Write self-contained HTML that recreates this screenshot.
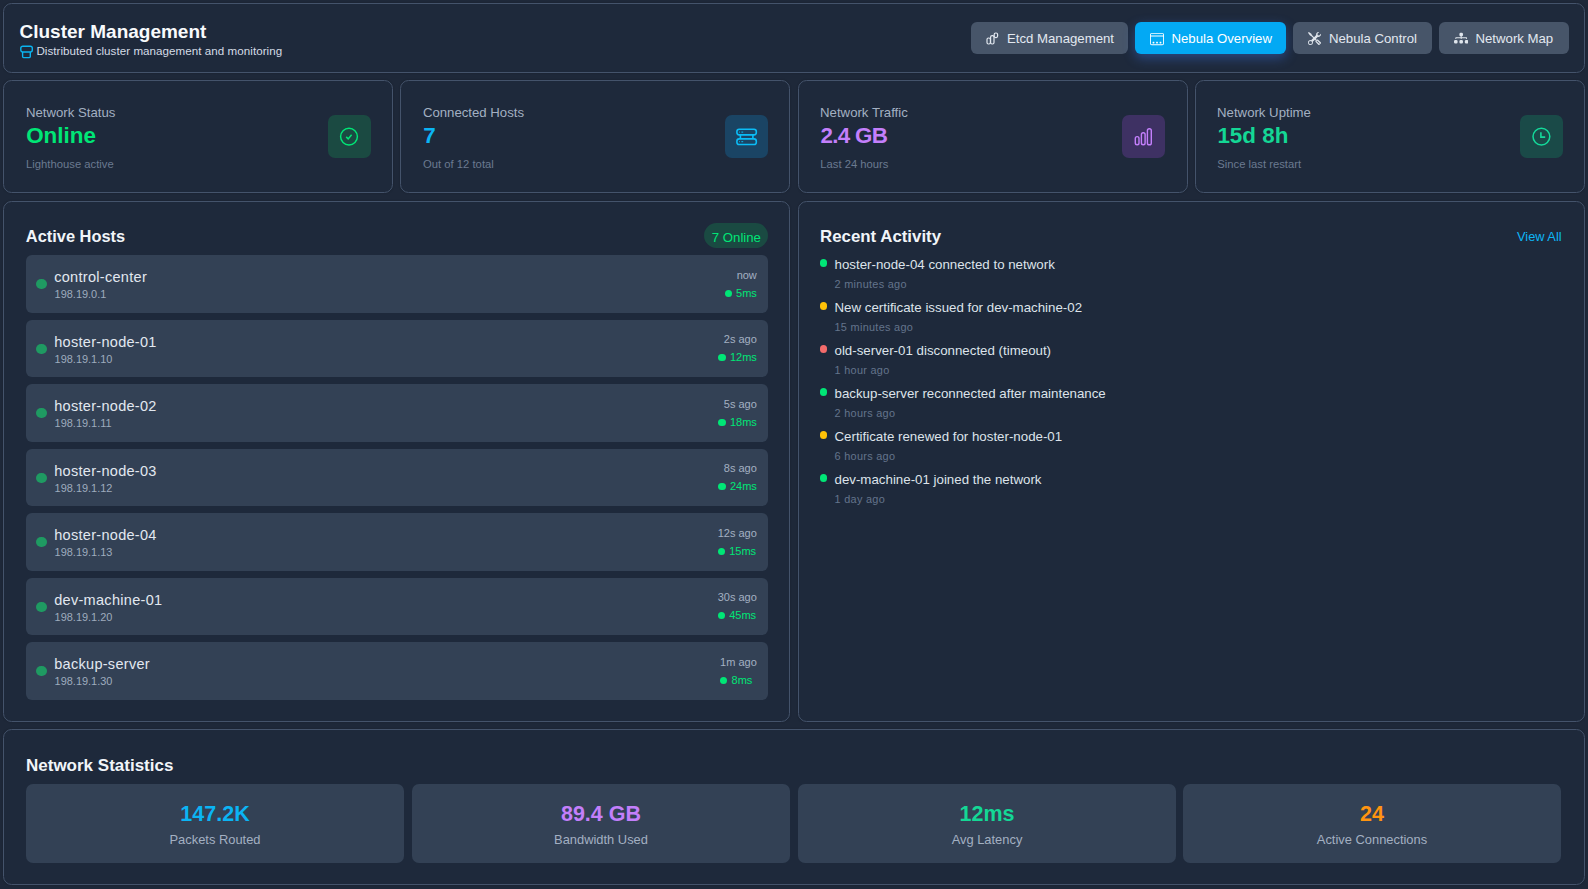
<!DOCTYPE html>
<html><head><meta charset="utf-8">
<style>
*{box-sizing:border-box;margin:0;padding:0}
html,body{width:1588px;height:889px;overflow:hidden;background:#1e2839;font-family:"Liberation Sans",sans-serif;}
.box{position:absolute;background:#1e293b;border:1px solid #44536b;border-radius:8.5px;box-shadow:0 0 2px rgba(0,0,0,.25)}
.t{position:absolute;line-height:1;white-space:nowrap}
.b{font-weight:700}
.btn{position:absolute;top:22px;height:32px;border-radius:6px;background:#475569}
.btn.on{background:#03a9f4;box-shadow:0 4px 12px rgba(60,120,235,.42)}
.btn svg{position:absolute}
.btxt{position:absolute;top:10.3px;font-size:13.2px;line-height:1;color:#e2e8f0;white-space:nowrap}
.btn.on .btxt{color:#fff}
.lbl{font-size:13.2px;color:#a3b0c2}
.val{font-size:22.4px;font-weight:700}
.sub{font-size:11.25px;color:#6b7a90}
.ibox{position:absolute;top:34px;width:43px;height:43px;border-radius:7px}
.ibox svg{position:absolute;left:0;top:0}
.row{position:absolute;left:22px;width:742px;height:57.5px;background:#334155;border-radius:6px}
.row .dot{position:absolute;left:10px;top:24px;width:10.5px;height:10.3px;border-radius:50%;background:#1f9a62}
.row .nm{position:absolute;left:28.2px;top:15px;font-size:14.5px;letter-spacing:.3px;color:#e2e8f0;line-height:1;white-space:nowrap}
.row .ip{position:absolute;left:28.6px;top:34.2px;font-size:10.95px;color:#9eabbd;line-height:1;white-space:nowrap}
.row .rc{position:absolute;right:11.2px;top:14.5px}
.row .tm{text-align:right;font-size:11px;color:#a3b0c2;line-height:1;white-space:nowrap;height:18.1px}
.row .lt{display:flex;align-items:center;font-size:11px;color:#00e676;line-height:1;white-space:nowrap}
.row .lt i{display:block;width:7.2px;height:7.2px;border-radius:50%;background:#00e676;margin-right:4.3px;margin-top:0.6px}
.act{position:absolute;left:19px;height:43px;width:700px}
.act .d{position:absolute;left:1.5px;top:15.3px;width:7.5px;height:7.5px;border-radius:50%}
.act .m{position:absolute;left:16.5px;top:13.8px;font-size:13.3px;color:#dde3ea;line-height:1;white-space:nowrap}
.act .w{position:absolute;left:16.5px;top:35.2px;font-size:10.9px;letter-spacing:.3px;color:#64748b;line-height:1;white-space:nowrap}
.sbox{position:absolute;top:54px;width:378px;height:79px;background:#334155;border-radius:7px}
.sbox .v{position:absolute;left:0;right:0;top:20px;text-align:center;font-size:21.5px;font-weight:700;line-height:1}
.sbox .l{position:absolute;left:0;right:0;top:49.8px;text-align:center;font-size:12.9px;color:#a3b0c2;line-height:1}
</style></head><body>

<!-- HEADER -->
<div class="box" style="left:3px;top:3px;width:1582px;height:70px;">
  <div class="t b" style="left:15.5px;top:17.6px;font-size:19px;color:#f8fafc">Cluster Management</div>
  <svg style="position:absolute;left:15.6px;top:40.5px" width="14" height="14" viewBox="0 0 14 14" fill="none" stroke="#0ab4f0" stroke-width="1.4">
    <rect x="0.8" y="1.2" width="11.5" height="5.8" rx="2"/>
    <path d="M2.6 7V11.6Q2.6 12.6 3.6 12.6H9.3Q10.3 12.6 10.3 11.6V7"/>
  </svg>
  <div class="t" style="left:32.4px;top:41.1px;font-size:11.6px;color:#d5dce6;letter-spacing:.05px">Distributed cluster management and monitoring</div>
</div>

<!-- BUTTONS -->
<div class="btn" style="left:971px;width:157px">
  <svg style="left:14.5px;top:9.5px" width="13" height="13" viewBox="0 0 13 13" fill="none" stroke="#e2e8f0" stroke-width="1.2">
    <rect x="1" y="6" width="3.4" height="6" rx="1.5"/>
    <rect x="4.6" y="3.6" width="3.4" height="8.4" rx="1.5"/>
    <rect x="8.2" y="1" width="3.4" height="4.6" rx="1.5"/>
  </svg>
  <div class="btxt" style="left:36px">Etcd Management</div>
</div>
<div class="btn on" style="left:1135px;width:151px">
  <svg style="left:14.6px;top:9.5px" width="14" height="14" viewBox="0 0 16 16" fill="#fff">
    <path d="M3.5 11a.5.5 0 0 0-.5.5v1a.5.5 0 0 0 .5.5h1a.5.5 0 0 0 .5-.5v-1a.5.5 0 0 0-.5-.5h-1Zm3.5.5a.5.5 0 0 1 .5-.5h1a.5.5 0 0 1 .5.5v1a.5.5 0 0 1-.5.5h-1a.5.5 0 0 1-.5-.5v-1Zm4.5-.5a.5.5 0 0 0-.5.5v1a.5.5 0 0 0 .5.5h1a.5.5 0 0 0 .5-.5v-1a.5.5 0 0 0-.5-.5h-1Z"/>
    <path d="M14 1a2 2 0 0 1 2 2v10a2 2 0 0 1-2 2H2a2 2 0 0 1-2-2V3a2 2 0 0 1 2-2h12ZM2 14h12a1 1 0 0 0 1-1V5H1v8a1 1 0 0 0 1 1ZM2 2a1 1 0 0 0-1 1v1h14V3a1 1 0 0 0-1-1H2Z"/>
  </svg>
  <div class="btxt" style="left:36.5px">Nebula Overview</div>
</div>
<div class="btn" style="left:1293px;width:139px">
  <svg style="left:14.6px;top:9.6px" width="13" height="13" viewBox="0 0 16 16" fill="#dfe5ec">
    <path d="M1 0 0 1l2.2 3.081a1 1 0 0 0 .815.419h.07a1 1 0 0 1 .708.293l2.675 2.675-2.617 2.654A3.003 3.003 0 0 0 0 13a3 3 0 1 0 5.878-.851l2.654-2.617.968.968-.305.914a1 1 0 0 0 .242 1.023l3.27 3.27a.997.997 0 0 0 1.414 0l1.586-1.586a.997.997 0 0 0 0-1.414l-3.27-3.27a1 1 0 0 0-1.023-.242L10.5 9.5l-.96-.96 2.68-2.643A3.005 3.005 0 0 0 16 3c0-.269-.035-.53-.102-.777l-2.14 2.141L12 4l-.364-1.757L13.777.102a3 3 0 0 0-3.675 3.68L7.462 6.46 4.793 3.793a1 1 0 0 1-.293-.707v-.071a1 1 0 0 0-.419-.814L1 0Zm9.646 10.646a.5.5 0 0 1 .708 0l2.914 2.915a.5.5 0 0 1-.707.707l-2.915-2.914a.5.5 0 0 1 0-.708ZM3 11l.471.242.529.026.287.445.445.287.026.529L5 13l-.242.471-.026.529-.445.287-.287.445-.529.026L3 15l-.471-.242L2 14.732l-.287-.445L1.268 14l-.026-.529L1 13l.242-.471.026-.529.445-.287.287-.445.529-.026L3 11Z"/>
  </svg>
  <div class="btxt" style="left:36px">Nebula Control</div>
</div>
<div class="btn" style="left:1439px;width:130px">
  <svg style="left:14.8px;top:8.6px" width="14.4" height="14.4" viewBox="0 0 16 16" fill="#dfe5ec">
    <path fill-rule="evenodd" d="M6 3.5A1.5 1.5 0 0 1 7.5 2h1A1.5 1.5 0 0 1 10 3.5v1A1.5 1.5 0 0 1 8.5 6v1H14a.5.5 0 0 1 .5.5v1a.5.5 0 0 1-1 0V8h-5v.5a.5.5 0 0 1-1 0V8h-5v.5a.5.5 0 0 1-1 0v-1A.5.5 0 0 1 2 7h5.5V6A1.5 1.5 0 0 1 6 4.5v-1zm-6 8A1.5 1.5 0 0 1 1.5 10h1A1.5 1.5 0 0 1 4 11.5v1A1.5 1.5 0 0 1 2.5 14h-1A1.5 1.5 0 0 1 0 12.5v-1zm6 0A1.5 1.5 0 0 1 7.5 10h1a1.5 1.5 0 0 1 1.5 1.5v1A1.5 1.5 0 0 1 8.5 14h-1A1.5 1.5 0 0 1 6 12.5v-1zm6 0a1.5 1.5 0 0 1 1.5-1.5h1a1.5 1.5 0 0 1 1.5 1.5v1a1.5 1.5 0 0 1-1.5 1.5h-1a1.5 1.5 0 0 1-1.5-1.5v-1z"/>
  </svg>
  <div class="btxt" style="left:36.5px">Network Map</div>
</div>

<!-- STAT CARDS -->
<div class="box" style="left:3px;top:80px;width:390px;height:113px">
  <div class="t lbl" style="left:21.9px;top:24.7px">Network Status</div>
  <div class="t val" style="left:22.2px;top:44px;color:#00e676">Online</div>
  <div class="t sub" style="left:22.1px;top:77.5px">Lighthouse active</div>
  <div class="ibox" style="left:324px;background:#1b4a42">
    <svg width="43" height="43" viewBox="0 0 43 43" fill="none" stroke="#00e676" stroke-width="1.45">
      <circle cx="21" cy="21.6" r="8.4"/>
      <path d="M18.2 21.9L20.2 23.9L23.6 19.8" stroke-width="1.5"/>
    </svg>
  </div>
</div>
<div class="box" style="left:400px;top:80px;width:390px;height:113px">
  <div class="t lbl" style="left:21.9px;top:24.7px">Connected Hosts</div>
  <div class="t val" style="left:22.2px;top:44px;color:#0bb4f4">7</div>
  <div class="t sub" style="left:22.1px;top:77.5px">Out of 12 total</div>
  <div class="ibox" style="left:324px;background:#1a4464">
    <svg width="43" height="43" viewBox="0 0 43 43" fill="none" stroke="#0bbcf6" stroke-width="1.6">
      <rect x="11.9" y="14.3" width="19.4" height="5.6" rx="2.3"/>
      <rect x="11.9" y="23.9" width="19.4" height="5.6" rx="2.3"/>
      <path d="M15.4 19.9V23.9M27.9 19.9V23.9"/>
      <path d="M14.2 17.1H15M16.4 17.1H18.2M14.2 26.7H15M16.4 26.7H18.2" stroke-width="1"/>
    </svg>
  </div>
</div>
<div class="box" style="left:798px;top:80px;width:390px;height:113px">
  <div class="t lbl" style="left:21.1px;top:24.7px">Network Traffic</div>
  <div class="t val" style="left:21.4px;top:44px;color:#c37ffb;letter-spacing:-.7px">2.4 GB</div>
  <div class="t sub" style="left:21.3px;top:77.5px">Last 24 hours</div>
  <div class="ibox" style="left:323px;background:#3e3163">
    <svg width="43" height="43" viewBox="0 0 43 43" fill="none" stroke="#c37ffb" stroke-width="1.4">
      <rect x="13.3" y="21.6" width="3.7" height="8.2" rx="1.8"/>
      <rect x="19.4" y="17.7" width="3.7" height="12.1" rx="1.8"/>
      <rect x="25.4" y="13.7" width="3.9" height="16.1" rx="1.9"/>
    </svg>
  </div>
</div>
<div class="box" style="left:1195px;top:80px;width:390px;height:113px">
  <div class="t lbl" style="left:21.1px;top:24.7px">Network Uptime</div>
  <div class="t val" style="left:21.4px;top:44px;color:#14d795">15d 8h</div>
  <div class="t sub" style="left:21.3px;top:77.5px">Since last restart</div>
  <div class="ibox" style="left:324px;background:#1a4a48">
    <svg width="43" height="43" viewBox="0 0 43 43" fill="none" stroke="#14d99a" stroke-width="1.5">
      <circle cx="21.4" cy="21.6" r="8.4"/>
      <path d="M20.9 17.2V22.1H25.2" stroke-width="1.6"/>
    </svg>
  </div>
</div>

<!-- ACTIVE HOSTS -->
<div class="box" style="left:3px;top:201px;width:787px;height:521px">
  <div class="t b" style="left:21.8px;top:26px;font-size:16.4px;color:#f1f5f9">Active Hosts</div>
  <div style="position:absolute;left:700.3px;top:21.2px;width:63.6px;height:25px;border-radius:13px;background:#1a4a42"></div>
  <div class="t" style="left:707.8px;top:28.8px;font-size:13.2px;color:#00e676">7 Online</div>

  <div class="row" style="top:53px"><div class="dot"></div><div class="nm">control-center</div><div class="ip">198.19.0.1</div><div class="rc"><div class="tm">now</div><div class="lt"><i></i>5ms</div></div></div>
  <div class="row" style="top:117.5px"><div class="dot"></div><div class="nm">hoster-node-01</div><div class="ip">198.19.1.10</div><div class="rc"><div class="tm">2s ago</div><div class="lt"><i></i>12ms</div></div></div>
  <div class="row" style="top:182px"><div class="dot"></div><div class="nm">hoster-node-02</div><div class="ip">198.19.1.11</div><div class="rc"><div class="tm">5s ago</div><div class="lt"><i></i>18ms</div></div></div>
  <div class="row" style="top:246.5px"><div class="dot"></div><div class="nm">hoster-node-03</div><div class="ip">198.19.1.12</div><div class="rc"><div class="tm">8s ago</div><div class="lt"><i></i>24ms</div></div></div>
  <div class="row" style="top:311px"><div class="dot"></div><div class="nm">hoster-node-04</div><div class="ip">198.19.1.13</div><div class="rc"><div class="tm">12s ago</div><div class="lt"><i></i>15ms</div></div></div>
  <div class="row" style="top:375.5px"><div class="dot"></div><div class="nm">dev-machine-01</div><div class="ip">198.19.1.20</div><div class="rc"><div class="tm">30s ago</div><div class="lt"><i></i>45ms</div></div></div>
  <div class="row" style="top:440px"><div class="dot"></div><div class="nm">backup-server</div><div class="ip">198.19.1.30</div><div class="rc"><div class="tm">1m ago</div><div class="lt"><i></i>8ms</div></div></div>
</div>

<!-- RECENT ACTIVITY -->
<div class="box" style="left:798px;top:201px;width:787px;height:521px">
  <div class="t b" style="left:21px;top:26.5px;font-size:16.85px;color:#f1f5f9">Recent Activity</div>
  <div class="t" style="left:718px;top:29.1px;font-size:12.8px;color:#0db6f6">View All</div>

  <div class="act" style="top:42px"><div class="d" style="background:#00e676"></div><div class="m">hoster-node-04 connected to network</div><div class="w">2 minutes ago</div></div>
  <div class="act" style="top:85px"><div class="d" style="background:#ffc107"></div><div class="m">New certificate issued for dev-machine-02</div><div class="w">15 minutes ago</div></div>
  <div class="act" style="top:128px"><div class="d" style="background:#f36b6b"></div><div class="m">old-server-01 disconnected (timeout)</div><div class="w">1 hour ago</div></div>
  <div class="act" style="top:171px"><div class="d" style="background:#00e676"></div><div class="m">backup-server reconnected after maintenance</div><div class="w">2 hours ago</div></div>
  <div class="act" style="top:214px"><div class="d" style="background:#ffc107"></div><div class="m">Certificate renewed for hoster-node-01</div><div class="w">6 hours ago</div></div>
  <div class="act" style="top:257px"><div class="d" style="background:#00e676"></div><div class="m">dev-machine-01 joined the network</div><div class="w">1 day ago</div></div>
</div>

<!-- NETWORK STATISTICS -->
<div class="box" style="left:3px;top:729px;width:1582px;height:156px">
  <div class="t b" style="left:22px;top:26.9px;font-size:17px;color:#f1f5f9">Network Statistics</div>
  <div class="sbox" style="left:22px"><div class="v" style="color:#0bb4f4">147.2K</div><div class="l">Packets Routed</div></div>
  <div class="sbox" style="left:408px"><div class="v" style="color:#c37ffb">89.4 GB</div><div class="l">Bandwidth Used</div></div>
  <div class="sbox" style="left:794px"><div class="v" style="color:#14d795">12ms</div><div class="l">Avg Latency</div></div>
  <div class="sbox" style="left:1179px"><div class="v" style="color:#ff9410">24</div><div class="l">Active Connections</div></div>
</div>

</body></html>
